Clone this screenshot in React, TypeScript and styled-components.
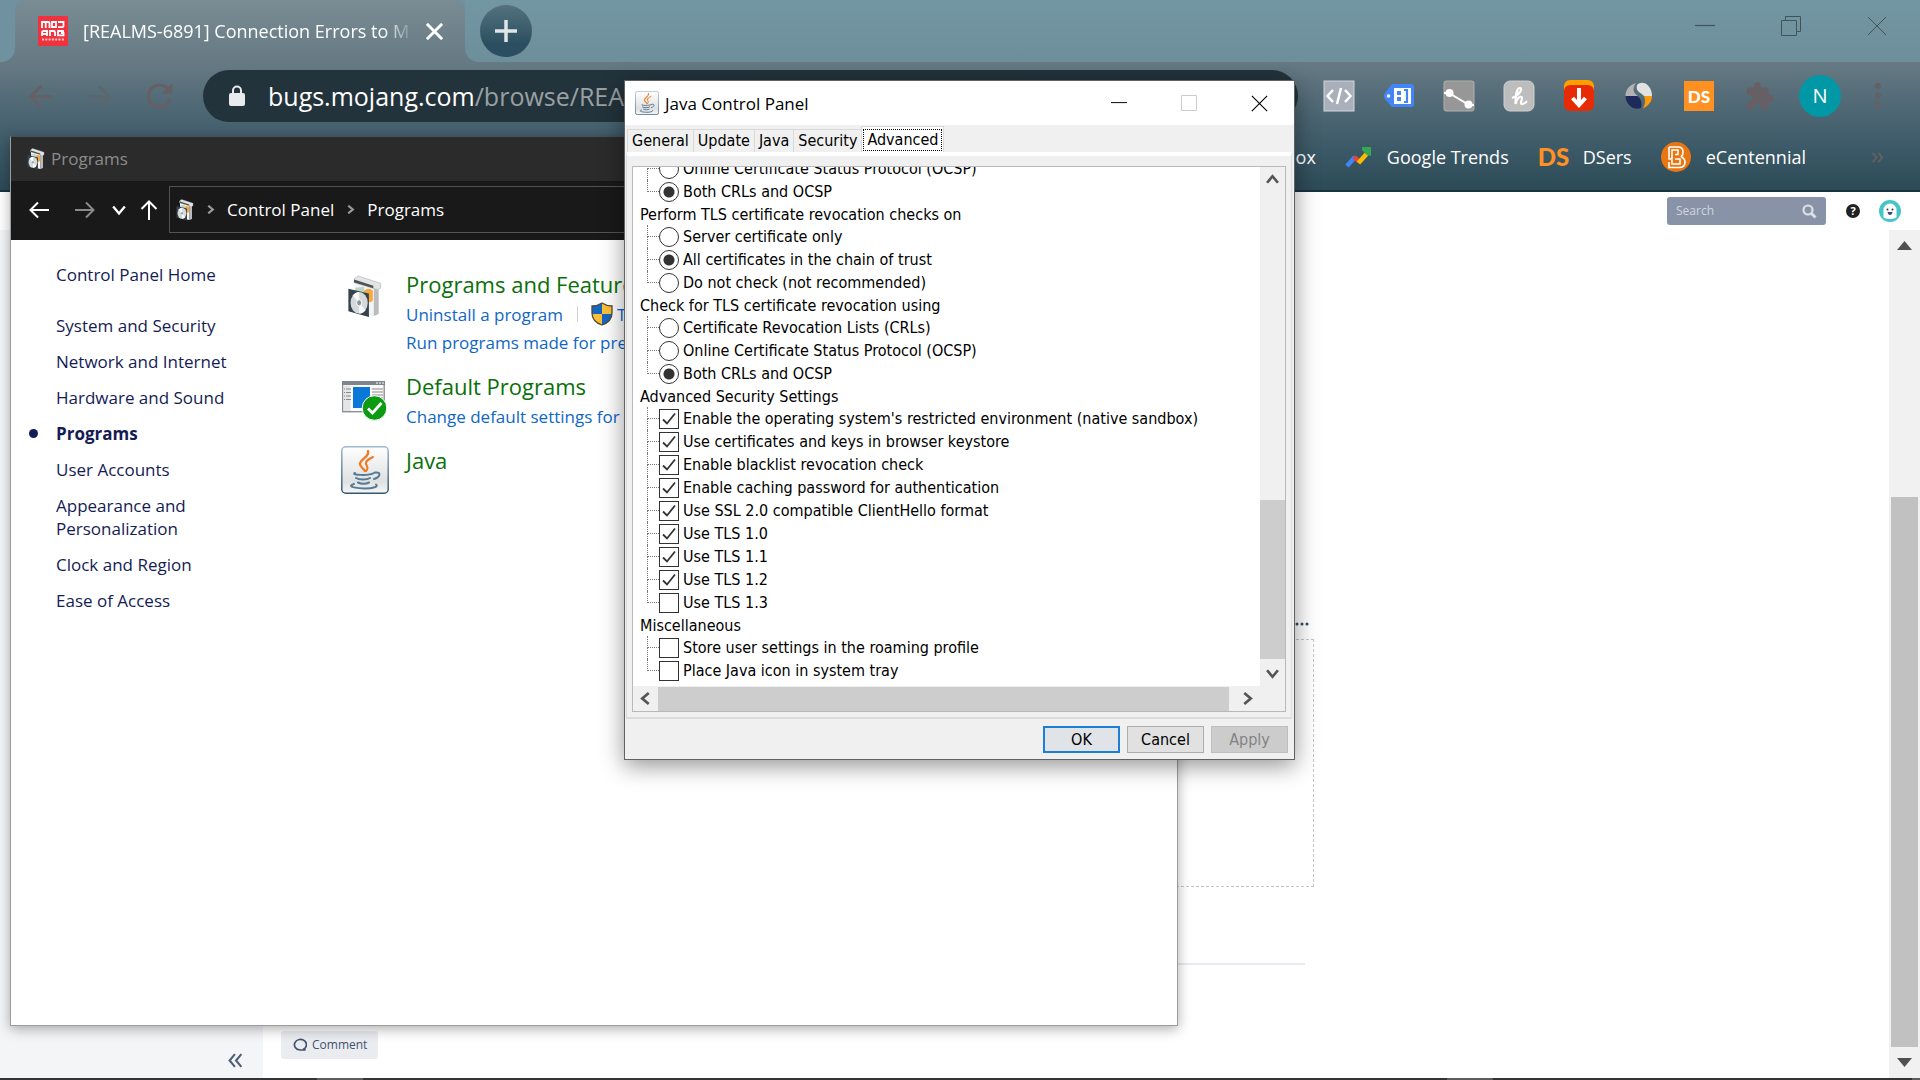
import React from 'react';
import styled, { createGlobalStyle } from 'styled-components';

const ui = `'Open Sans', 'Noto Sans', sans-serif`;
const dialogFont = `'DejaVu Sans Condensed', 'Noto Sans', sans-serif`;
const stripColor = '#7092a0';
const mutedIcon = '#665f63';

const GlobalStyle = createGlobalStyle`
  *, *::before, *::after { box-sizing: border-box; }
  html, body { margin: 0; }
  body { font-family: ${ui}; overflow: hidden; }
  button { font: inherit; color: inherit; background: none; border: 0; padding: 0; }
  a { color: inherit; text-decoration: none; }
  svg { display: block; flex: none; }
`;

/* ---------- Desktop ---------- */

const Desktop = styled.div`
  position: relative;
  display: flex;
  flex-direction: column;
  height: 100vh;
  overflow: hidden;
  background: #fff;
`;

const Taskbar = styled.footer`
  display: flex;
  flex: none;
  height: 2px;
  background: #333436;
`;

const TaskGap = styled.span<{ $grow: number }>`
  flex: ${p => p.$grow};
`;

const TaskMark = styled.span<{ $wide?: boolean }>`
  width: ${p => (p.$wide ? 46 : 8)}px;
  background: #5b5d60;
`;

/* ---------- Browser chrome ---------- */

const BrowserHead = styled.header`
  flex: none;
  border-bottom: 2px solid #1b333e;
  background: linear-gradient(#7a8c93 0, #667a84 62px, #4b6572 116px, #3b5866 152px, #2d4a57 190px);
`;

const TabStrip = styled.div`
  display: flex;
  height: 62px;
`;

const StripStart = styled.div`
  width: 15px;
  background: ${stripColor};
  border-bottom-right-radius: 14px;
`;

const StripRest = styled.div`
  display: flex;
  flex: 1;
  align-items: center;
  padding-left: 15px;
  background: linear-gradient(#7296a2, #6d8f9b);
  border-bottom-left-radius: 14px;
`;

const Tab = styled.div`
  display: flex;
  align-items: center;
  width: 450px;
  padding: 0 22px 0 23px;
  background:
    radial-gradient(circle at 10px 10px, transparent 10px, ${stripColor} 10px) left top / 10px 10px no-repeat,
    radial-gradient(circle at 0 10px, transparent 10px, ${stripColor} 10px) right top / 10px 10px no-repeat;
`;

const TabTitle = styled.span`
  flex: 1;
  margin: 0 16px 0 15px;
  overflow: hidden;
  white-space: nowrap;
  font-size: 18px;
  line-height: 28px;
  color: #fff;
  mask-image: linear-gradient(90deg, #000 300px, transparent 332px);
`;

const NewTab = styled.button`
  display: grid;
  place-items: center;
  width: 52px;
  height: 52px;
  border-radius: 50%;
  background: linear-gradient(#54727e, #2b4f60 75%);
`;

const WindowButtons = styled.div`
  display: flex;
  gap: 66px;
  margin: 0 33px 10px auto;
`;

const Toolbar = styled.div`
  display: flex;
  align-items: center;
  height: 68px;
  padding: 0 39px 0 28px;
`;

const NavButtons = styled.div`
  display: flex;
  gap: 34px;
  width: 175px;
`;

const Address = styled.div`
  display: flex;
  flex: 1;
  align-items: center;
  gap: 23px;
  height: 52px;
  padding-left: 26px;
  border-radius: 26px;
  background: #23333b;
`;

const Url = styled.a`
  font-size: 25px;
  line-height: 36px;
  color: #9aa0a3;
`;

const UrlHost = styled.span`
  color: #fff;
`;

const Extensions = styled.div`
  display: flex;
  align-items: center;
  gap: 28px;
  margin-left: 25px;
`;

const Tool = styled.button`
  display: grid;
  place-items: center;
  width: 32px;
  height: 32px;
`;

const Profile = styled.button`
  width: 42px;
  height: 42px;
  margin: 0 6px 0 -4px;
  border-radius: 50%;
  background: #0097a7;
  color: #fff;
  font-size: 20px;
  line-height: 42px;
`;

const Bookmarks = styled.nav`
  display: flex;
  align-items: center;
  justify-content: flex-end;
  gap: 29px;
  height: 60px;
  padding: 0 36px 6px 27px;
`;

const Bookmark = styled.a`
  display: flex;
  align-items: center;
  gap: 15px;
  color: #fff;
  font-size: 18px;
  line-height: 26px;
`;

const MoreBookmarks = styled.button`
  margin-left: 36px;
`;

/* ---------- Issue tracker page ---------- */

const PageHead = styled.div`
  display: flex;
  flex: none;
  align-items: center;
  justify-content: flex-end;
  height: 38px;
  padding-right: 19px;
`;

const SearchBox = styled.label`
  display: flex;
  align-items: center;
  width: 159px;
  height: 28px;
  padding: 0 9px;
  border-radius: 3px;
  background: #8993a7;
`;

const SearchInput = styled.input`
  flex: 1;
  min-width: 0;
  padding: 0;
  border: 0;
  outline: 0;
  background: none;
  font: 12px/20px ${ui};
  &::placeholder { color: #d0d5df; opacity: 1; }
`;

const HelpButton = styled.button`
  width: 14px;
  height: 14px;
  margin: 0 19px 0 20px;
  border-radius: 50%;
  background: #222;
  color: #fff;
  font-size: 11px;
  font-weight: 700;
  line-height: 14px;
`;

const PageBody = styled.div`
  display: flex;
  flex: 1;
  min-height: 0;
`;

const PageSidebar = styled.aside`
  display: flex;
  align-items: flex-end;
  justify-content: flex-end;
  width: 263px;
  padding: 0 20px 10px;
  background: #f4f5f7;
`;

const Issue = styled.main`
  display: flex;
  flex: 1;
  flex-direction: column;
  justify-content: flex-end;
  padding: 0 0 19px 18px;
`;

const IssueColumn = styled.div`
  width: 1033px;
`;

const SectionMenu = styled.button`
  display: block;
  margin: 0 5px 13px auto;
`;

const DropZone = styled.div`
  height: 248px;
  border: 1px dashed #c4c6ca;
`;

const Divider = styled.hr`
  height: 2px;
  margin: 76px 9px 66px 0;
  border: 0;
  background: #e9eaef;
`;

const CommentButton = styled.button`
  display: flex;
  align-items: center;
  gap: 5px;
  height: 28px;
  padding: 0 11px;
  border-radius: 3px;
  background: #ebecf0;
  color: #42526e;
  font-size: 12px;
  line-height: 20px;
`;

const PageScroll = styled.div`
  display: flex;
  flex-direction: column;
  justify-content: space-between;
  width: 31px;
  padding: 0 2px;
  background: #f1f1f1;
`;

const PageScrollButton = styled.button`
  display: grid;
  place-items: center;
  width: 100%;
  height: 31px;
`;

const ScrollTrack = styled.div`
  display: flex;
  flex: 1;
  flex-direction: column;
  justify-content: flex-end;
`;

const ScrollThumb = styled.div<{ $size: number }>`
  height: ${p => p.$size}%;
  background: #c1c1c1;
`;

/* ---------- Control panel window ---------- */

const ProgramsWindow = styled.section`
  position: absolute;
  left: 10px;
  top: 136px;
  width: 1168px;
  height: 890px;
  border: 1px solid #9b9b9b;
  border-top-color: #454f54;
  background: #fff;
  box-shadow: 0 3px 12px rgba(0, 0, 0, 0.32);
`;

const ProgramsTitle = styled.header`
  display: flex;
  align-items: center;
  gap: 6px;
  height: 44px;
  padding-left: 16px;
  background: #2b2b2b;
  color: #8b8b8b;
  font-size: 17px;
  line-height: 24px;
`;

const ProgramsNav = styled.nav`
  display: flex;
  align-items: center;
  height: 59px;
  padding: 0 0 2px 18px;
  background: #191919;
  color: #fff;
`;

const HistoryButtons = styled.div`
  display: flex;
  align-items: center;
  width: 140px;
`;

const HistoryButton = styled.button<{ $gap: number }>`
  margin-right: ${p => p.$gap}px;
`;

const PathBox = styled.div`
  display: flex;
  flex: 1;
  align-items: center;
  gap: 12px;
  height: 47px;
  padding-left: 6px;
  border: 1px solid #535353;
  font-size: 17px;
  line-height: 24px;
`;

const ProgramsBody = styled.div`
  display: flex;
`;

const CategoryList = styled.ul`
  display: flex;
  flex-direction: column;
  gap: 13px;
  width: 328px;
  margin: 0;
  padding: 23px 110px 0 45px;
  list-style: none;
  color: #151c55;
  font-size: 17px;
  line-height: 23px;
`;

const Category = styled.li<{ $home?: boolean; $current?: boolean }>`
  position: relative;
  margin-bottom: ${p => (p.$home ? 15 : 0)}px;
  font-weight: ${p => (p.$current ? 700 : 400)};
  &::before {
    content: '';
    display: ${p => (p.$current ? 'block' : 'none')};
    position: absolute;
    left: -27px;
    top: 7px;
    width: 9px;
    height: 9px;
    border-radius: 50%;
    background: #151c55;
  }
`;

const Applets = styled.div`
  display: flex;
  flex: 1;
  flex-direction: column;
  gap: 14px;
  min-width: 0;
  padding-top: 28px;
  white-space: nowrap;
`;

const Applet = styled.article`
  display: flex;
  align-items: flex-start;
  gap: 17px;
`;

const AppletIcon = styled.div<{ $drop: number }>`
  display: grid;
  justify-items: center;
  width: 50px;
  padding: ${p => p.$drop}px 0 0 2px;
`;

const AppletTitle = styled.h2`
  margin: 0;
  color: #0a700a;
  font-size: 22px;
  font-weight: 400;
  line-height: 32px;
`;

const AppletLinks = styled.div`
  display: flex;
  align-items: center;
  height: 28px;
  color: #0f67c6;
  font-size: 17px;
`;

const LinkRule = styled.span`
  width: 1px;
  height: 16px;
  margin: 0 13px 0 14px;
  background: #d0d0d0;
`;

const ShieldLink = styled.a`
  display: flex;
  align-items: center;
  gap: 4px;
`;

/* ---------- Java control panel dialog ---------- */

const Dialog = styled.section`
  position: absolute;
  left: 624px;
  top: 80px;
  display: flex;
  flex-direction: column;
  width: 671px;
  height: 680px;
  border: 1px solid #5f6264;
  background: #f0f0f0;
  color: #000;
  font-family: ${dialogFont};
  font-size: 16px;
  box-shadow: 0 6px 22px rgba(0, 0, 0, 0.42);
`;

const DialogTitle = styled.header`
  display: flex;
  align-items: center;
  gap: 6px;
  height: 44px;
  padding: 0 26px 0 10px;
  background: #fff;
  font-family: ${ui};
  font-size: 17px;
`;

const DialogButtons = styled.div`
  display: flex;
  align-items: center;
  gap: 54px;
  margin-left: auto;
`;

const Tabs = styled.div`
  display: flex;
  align-items: flex-end;
  height: 27px;
  padding-left: 2px;
`;

const DialogTab = styled.button<{ $active?: boolean }>`
  height: ${p => (p.$active ? 26 : 23)}px;
  padding: ${p => (p.$active ? '1px' : '0 4px')};
  border: 1px solid #d9d9d9;
  border-bottom: 0;
  border-right-width: ${p => (p.$active ? 1 : 0)}px;
  background: ${p => (p.$active ? '#fff' : '#f0f0f0')};
  line-height: 22px;
`;

const TabFocus = styled.span`
  display: block;
  padding: 0 4px;
  outline: 1px dotted #000;
  outline-offset: -1px;
`;

const TabPane = styled.div`
  display: flex;
  flex: 1;
  min-height: 0;
  margin: 0 2px 0 1px;
  padding: 10px 5px 5px;
  border: 1px solid #dcdcdc;
  border-top: 4px solid #fff;
  border-bottom: 2px solid #dcdcdc;
`;

const ListFrame = styled.div`
  display: grid;
  flex: 1;
  grid-template-columns: 1fr 25px;
  grid-template-rows: 1fr 25px;
  min-height: 0;
  border: 1px solid #b9b9b9;
`;

const Tree = styled.div`
  display: flex;
  flex-direction: column;
  justify-content: flex-end;
  min-height: 0;
  padding-bottom: 4px;
  overflow: hidden;
  background: #fff;
`;

const TreeGroup = styled.fieldset`
  flex: none;
  margin: 0;
  padding: 0;
  border: 0;
`;

const TreeHeading = styled.legend`
  display: block;
  width: 100%;
  height: 22px;
  padding: 0 0 0 7px;
  line-height: 23px;
`;

const TreeRow = styled.label`
  display: flex;
  align-items: center;
  height: 23px;
  padding-left: 14px;
  line-height: 23px;
  white-space: nowrap;
`;

const Branch = styled.span<{ $last: boolean }>`
  align-self: stretch;
  width: 12px;
  &::before, &::after {
    content: '';
    display: block;
    height: 12px;
    border-left: 1px dotted #777;
  }
  &::before { border-bottom: 1px dotted #777; }
  &::after { height: 11px; visibility: ${p => (p.$last ? 'hidden' : 'visible')}; }
`;

const Mark = styled.input`
  appearance: none;
  flex: none;
  width: 20px;
  height: 20px;
  margin: 0 4px 0 0;
  border: 1px solid #333;
  background: #fff;
  &[type='radio'] { border-radius: 50%; }
  &[type='radio']:checked {
    background: radial-gradient(circle, #333 5px, #fff 6px);
  }
  &[type='checkbox']:checked {
    background: url("data:image/svg+xml,%3Csvg xmlns='http://www.w3.org/2000/svg' viewBox='0 0 18 18'%3E%3Cpath d='M3 9.500l4 4 8-10' fill='none' stroke='%23333' stroke-width='1.800'/%3E%3C/svg%3E");
  }
`;

const BarButton = styled.button`
  display: grid;
  place-items: center;
  flex: none;
  width: 25px;
  height: 25px;
  color: #555;
`;

const VerticalBar = styled.div`
  display: flex;
  flex-direction: column;
  min-height: 0;
`;

const VerticalTrack = styled.div`
  display: flex;
  flex: 1;
  flex-direction: column;
  justify-content: flex-end;
  margin-bottom: 2px;
`;

const HorizontalBar = styled.div`
  display: flex;
  align-items: center;
  height: 25px;
`;

const HorizontalTrack = styled.div`
  flex: 1;
  height: 24px;
`;

const Thumb = styled.div<{ $w?: number; $h?: number }>`
  width: ${p => p.$w ?? 100}%;
  height: ${p => p.$h ?? 100}%;
  background: #cdcdcd;
`;

const Actions = styled.footer`
  display: flex;
  justify-content: flex-end;
  gap: 7px;
  padding: 7px 6px 6px;
`;

const Action = styled.button<{ $primary?: boolean }>`
  width: 77px;
  height: 27px;
  border: ${p => (p.$primary ? '2px solid #1b7fd6' : '1px solid #adadad')};
  background: ${p => (p.$primary ? '#e0e4e9' : '#e1e1e1')};
  &:disabled { background: #cccccc; border-color: #bfbfbf; color: #838383; }
`;

/* ---------- Icons ---------- */

const MojangIcon = () => (
  <svg width="30" height="30" viewBox="0 0 30 30">
    <rect width="30" height="30" fill="#ef323d" />
    <g fill="none" stroke="#fff" strokeWidth="1.800">
      <path d="M4 12V6h6.500q1 0 1 1v5M7.700 6v6M14 6h4v5h-4zM20 6h5.500v4q0 1.200-1.200 1.200H20" />
      <path d="M4 20v-3.200q0-1.800 1.800-1.800H9v5M4 18h5M12 20v-5h3.500q1.500 0 1.500 1.500V20M26 15h-6v4.300h5.500V17H23" />
    </g>
    <path d="M4 23.500h22" stroke="#fff" strokeWidth="2" strokeDasharray="2 1.300" opacity=".75" />
  </svg>
);

const Cross = ({ size, width = 1, color = '#000' }: { size: number; width?: number; color?: string }) => (
  <svg width={size} height={size} viewBox="0 0 20 20" fill="none" stroke={color} strokeWidth={width}>
    <path d="M1 1l18 18M19 1L1 19" />
  </svg>
);

const Minimize = ({ size, color = '#000' }: { size: number; color?: string }) => (
  <svg width={size} height={size} viewBox="0 0 20 20">
    <path d="M0 9.500h20" stroke={color} strokeWidth="1.200" />
  </svg>
);

const Restore = () => (
  <svg width="20" height="20" viewBox="0 0 20 20" fill="none" stroke="#40545c">
    <path d="M.5 4.500h15v15H.5zM4.500 4.500v-4h15v15h-4" />
  </svg>
);

const ArrowNav = ({ flip, color }: { flip?: boolean; color: string }) => (
  <svg width="25" height="25" viewBox="0 0 26 26" fill="none" stroke={color} strokeWidth="3">
    <path d={flip ? 'M1 13h22M12 2l11.500 11L12 24' : 'M25 13H3M14 2L2.500 13 14 24'} />
  </svg>
);

const Reload = () => (
  <svg width="27" height="26" viewBox="0 0 27 26">
    <path d="M21.500 5.500A11 11 0 1 0 24 16" fill="none" stroke={mutedIcon} strokeWidth="3" />
    <path d="M26.500 0v11H15.500z" fill={mutedIcon} />
  </svg>
);

const Lock = () => (
  <svg width="16" height="22" viewBox="0 0 16 22">
    <path d="M4 9V5.500a4 4 0 0 1 8 0V9" fill="none" stroke="#e8eaed" strokeWidth="2" />
    <rect y="8" width="16" height="13" rx="2" fill="#e8eaed" />
  </svg>
);

const CodeIcon = () => (
  <svg width="32" height="32" viewBox="0 0 32 32">
    <rect x="1" y="1" width="30" height="30" fill="#a9afbb" stroke="#d3d6dc" />
    <path d="M10 10l-5.500 6 5.500 6M22 10l5.500 6-5.500 6M18 8l-4 16" fill="none" stroke="#fff" strokeWidth="2.500" />
  </svg>
);

const TagIcon = () => (
  <svg width="32" height="32" viewBox="0 0 32 32">
    <path d="M9 4h19a3 3 0 0 1 3 3v17a3 3 0 0 1-3 3H9L1 18v-4z" fill="#4285f4" />
    <rect x="11" y="8" width="17" height="16" fill="#fff" />
    <circle cx="5.500" cy="16" r="1.800" fill="#fff" />
    <path d="M14 11h4v4h-4zM14 17h4v4h-4z" fill="#4285f4" />
    <path d="M21 10h3v12h-3" fill="none" stroke="#4285f4" strokeWidth="2.200" />
  </svg>
);

const LineIcon = () => (
  <svg width="32" height="32" viewBox="0 0 32 32">
    <rect x="1" y="1" width="30" height="30" rx="2" fill="#979797" stroke="#b0b0b0" />
    <path d="M1 13h5L26 25h5" fill="none" stroke="#fff" strokeWidth="2" />
    <circle cx="6.500" cy="13" r="4" fill="#fff" />
    <circle cx="25.500" cy="24.500" r="4" fill="#fff" />
  </svg>
);

const HoneyIcon = () => (
  <svg width="32" height="32" viewBox="0 0 32 32">
    <rect x="1" y="1" width="30" height="30" rx="6" fill="#bdbdbd" stroke="#cfcfcf" />
    <path d="M9 18C17 15 20 8 17 8s-4.500 8-4.500 16c1-5 4-8 6-7s-2.500 7 .5 7 4-2 5-3" fill="none" stroke="#fff" strokeWidth="2.200" />
  </svg>
);

const DownloadIcon = () => (
  <svg width="32" height="32" viewBox="0 0 32 32">
    <rect x="1" width="30" height="20" rx="6" fill="#ffa000" />
    <rect x="1" y="5" width="30" height="26" rx="6" fill="#e62b05" />
    <path d="M16 8v16M9.500 18l6.500 7 6.500-7" fill="none" stroke="#fff" strokeWidth="4" />
  </svg>
);

const SwirlIcon = () => (
  <svg width="32" height="32" viewBox="0 0 32 32">
    <path d="M13 3C6 5 2.500 10 2.500 16H15C10 13 9 8 13 3z" fill="#b3b3b3" />
    <path d="M2.500 16H14c5 3 5 8 4 12-8 3-15.500-4-15.500-12z" fill="#1f2a5c" />
    <path d="M14 5c3-3 8-3 11.500 1 2.500 3 3.500 6 3.500 10h-8c-2-3-9-4-7-11z" fill="#e2e2e2" />
    <path d="M21 16h8c0 6-4 10-9 12.500 2-4 3-8 1-12.500z" fill="#ff9a0c" />
  </svg>
);

const LogoText = styled.span<{ $boxed?: boolean }>`
  display: grid;
  place-items: center;
  width: 30px;
  height: 30px;
  background: ${p => (p.$boxed ? '#ff9123' : 'transparent')};
  color: ${p => (p.$boxed ? '#fff' : '#ff9123')};
  font-family: Lato, sans-serif;
  font-size: ${p => (p.$boxed ? 17 : 24)}px;
  font-weight: 900;
`;

const Puzzle = () => (
  <svg width="31" height="31" viewBox="0 0 24 24" fill={mutedIcon}>
    <path d="M20.500 11H19V7a2 2 0 0 0-2-2h-4V3.500a2.500 2.500 0 0 0-5 0V5H4a2 2 0 0 0-2 2v3.800h1.500a2.700 2.700 0 0 1 0 5.400H2V20a2 2 0 0 0 2 2h3.800v-1.500a2.700 2.700 0 0 1 5.400 0V22H17a2 2 0 0 0 2-2v-4h1.500a2.500 2.500 0 0 0 0-5z" />
  </svg>
);

const Dots = () => (
  <svg width="6" height="30" viewBox="0 0 6 30" fill={mutedIcon}>
    <circle cx="3" cy="5" r="3" />
    <circle cx="3" cy="14.500" r="3" />
    <circle cx="3" cy="24" r="3" />
  </svg>
);

const TrendsIcon = () => (
  <svg width="27" height="22" viewBox="0 0 27 22" fill="none" strokeWidth="4.500">
    <path d="M2 20l8-9" stroke="#4285f4" />
    <path d="M9 11l6 5" stroke="#ea4335" />
    <path d="M13.500 17l8-9" stroke="#fbbc04" />
    <path d="M17 1h9v9l-4-1-5-5z" fill="#34a853" />
  </svg>
);

const CentennialIcon = () => (
  <svg width="30" height="30" viewBox="0 0 30 30">
    <circle cx="15" cy="15" r="15" fill="#ea7612" />
    <path d="M8 5h9q5 0 5 5 0 3-1.500 4.500Q24 17 24 20q0 5.500-6 5.500H8V20M8 5v12h3V8h6v4.500h-3M14 17h5v5h-8v-4" fill="none" stroke="#fff" strokeWidth="1.600" />
  </svg>
);

const Chevrons = ({ left, color, size }: { left?: boolean; color: string; size: number }) => (
  <svg width={size} height={size} viewBox="0 0 14 14" fill="none" stroke={color} strokeWidth="2">
    <path d={left ? 'M6.500 1l-5 6 5 6M12.500 1l-5 6 5 6' : 'M2 2l4 5-4 5M8 2l4 5-4 5'} />
  </svg>
);

const Magnifier = () => (
  <svg width="15" height="15" viewBox="0 0 15 15" fill="none" stroke="#dde1e8">
    <circle cx="6" cy="6" r="4.500" strokeWidth="2.200" />
    <path d="M9.500 9.500l4 4" strokeWidth="2.800" />
  </svg>
);

const GhostAvatar = () => (
  <svg width="22" height="22" viewBox="0 0 22 22">
    <circle cx="11" cy="11" r="11" fill="#44c6c8" />
    <path d="M4.500 17.500V10a6.500 6.500 0 0 1 13 0v7.500q-3 1.500-6.500 1.500t-6.500-1.500z" fill="#fff" />
    <circle cx="8.500" cy="9.500" r="1" fill="#253858" />
    <circle cx="13.500" cy="9.500" r="1" fill="#253858" />
    <path d="M8.500 12h5q-.5 3-2.500 3t-2.500-3z" fill="#3a4b84" />
  </svg>
);

const Ellipsis = () => (
  <svg width="14" height="4" viewBox="0 0 14 4" fill="#344563">
    <circle cx="2" cy="2" r="1.500" />
    <circle cx="7" cy="2" r="1.500" />
    <circle cx="12" cy="2" r="1.500" />
  </svg>
);

const CommentIcon = () => (
  <svg width="15" height="14" viewBox="0 0 15 14" fill="none" stroke="#42526e" strokeWidth="1.700">
    <path d="M11 11.500A6 5.300 0 1 0 8 12h5.500q-1.500-.5-1.700-1.700" />
  </svg>
);

const Triangle = ({ down }: { down?: boolean }) => (
  <svg width="15" height="9" viewBox="0 0 15 9" fill="#505050">
    <path d={down ? 'M0 0h15L7.500 9z' : 'M0 9h15L7.500 0z'} />
  </svg>
);

const ProgramBox = ({ width, height }: { width: number; height: number }) => (
  <svg width={width} height={height} viewBox="0 0 36 44">
    <path d="M8 6l19 5v31L8 38z" fill="#f4f4f4" />
    <path d="M27 10l5 1v29l-5 2z" fill="#b9bcbe" />
    <path d="M7 4l4-3 23 7.500v5L31 15 7 8z" fill="#e3e4e5" stroke="#b5b5b5" strokeWidth=".7" />
    <path d="M6.500 7.500l20 6V11L7 4.500z" fill="#4f5254" />
    <path d="M8 13l9-1 1 9-10 1z" fill="#bcd6c4" />
    <path d="M17 16q5-4 9 0v10q-3 4-8 0z" fill="#f6a941" />
    <path d="M1 14l21 5v24L1 37z" fill="#36434c" />
    <ellipse cx="12" cy="28.500" rx="8.800" ry="11" fill="#d5d9db" />
    <path d="M12 28.500l-6.500-7.500A9 11 0 0 1 12 17.500zM12 28.500l6.500 7.500A9 11 0 0 1 12 39.500z" fill="#fafafa" />
    <ellipse cx="12" cy="28.500" rx="2.600" ry="3.200" fill="#8b9499" stroke="#fff" />
  </svg>
);

const DefaultProgramsIcon = () => (
  <svg width="46" height="40" viewBox="0 0 46 40">
    <rect x=".7" y=".7" width="41.500" height="30" fill="#fbfbfb" stroke="#8b8f94" strokeWidth="1.400" />
    <path d="M0 0h43v4H0z" fill="#7e858c" />
    <path d="M34 2h2M37 2h2M40 2h2" stroke="#fff" />
    <path d="M1.500 4.500h7V30h-7z" fill="#e4e5e7" />
    <path d="M2 8h7M2 11.500h7M2 15h7M2 18.500h7" stroke="#888" strokeDasharray="1 1 5 9" />
    <rect x="11" y="6" width="17" height="21" fill="#0a78d7" />
    <path d="M30 8h11M30 11h11M30 14h11M30 17h11" stroke="#888" />
    <circle cx="32.500" cy="27" r="12.300" fill="#0b9a12" stroke="#fff" />
    <path d="M26 27.500l4.500 4.500 9-10" fill="none" stroke="#fff" strokeWidth="2.800" />
  </svg>
);

const JavaIcon = ({ size }: { size: number }) => (
  <svg width={size} height={size} viewBox="0 0 48 48">
    <defs>
      <linearGradient id="javaTile" x1="0" y1="0" x2="0" y2="1">
        <stop offset="0" stopColor="#fff" />
        <stop offset=".75" stopColor="#dfe0e1" />
        <stop offset="1" stopColor="#f6f6f6" />
      </linearGradient>
      <linearGradient id="javaEdge" x1="0" y1="0" x2="0" y2="1">
        <stop offset="0" stopColor="#9fb9cf" />
        <stop offset="1" stopColor="#33586f" />
      </linearGradient>
    </defs>
    <rect x=".8" y=".8" width="46.400" height="46.400" rx="4" fill="url(#javaTile)" stroke="url(#javaEdge)" strokeWidth="1.500" />
    <g fill="none" strokeLinecap="round">
      <path d="M27 5c2 6-8 8-8 13 0 3 3 4 5 7" stroke="#ee7b22" strokeWidth="2.300" />
      <path d="M32 11c-4 2-8 4-7 7 1 2 3 4 0 7" stroke="#ee7b22" strokeWidth="2" />
      <path d="M14 27c-5 2 14 3 19 0M15 32c3 2 11 2 14 0M17 36.500c3 1.500 8 1.500 11 0M34 26.500c7-1 5 5-1 6.500" stroke="#557a95" strokeWidth="2" />
      <path d="M13 38c-9 3 5 4.500 11 4.500 8 0 14-2 11-4" stroke="#557a95" strokeWidth="2" />
    </g>
  </svg>
);

const Shield = () => (
  <svg width="22" height="24" viewBox="0 0 22 24">
    <path d="M11 1c3 2 6 3 10 3v7c0 6-4 10-10 12C5 21 1 17 1 11V4c4 0 7-1 10-3z" fill="#fcc037" />
    <path d="M11 1v11H1V4c4 0 7-1 10-3zM11 12h10c-.5 5-4 9-10 11z" fill="#1666c2" />
    <path d="M11 1c3 2 6 3 10 3v7c0 6-4 10-10 12C5 21 1 17 1 11V4c4 0 7-1 10-3z" fill="none" stroke="#4f4a38" strokeWidth="1.300" />
  </svg>
);

const Caret = ({ dir, size, color = 'currentColor', width = 2 }: { dir: 'up' | 'down' | 'left' | 'right'; size: number; color?: string; width?: number }) => {
  const d = {
    up: 'M1 9l5-6 5 6',
    down: 'M1 3l5 6 5-6',
    left: 'M9 1L3 6l6 5',
    right: 'M3 1l6 5-6 5',
  }[dir];
  return (
    <svg width={size} height={size} viewBox="0 0 12 12" fill="none" stroke={color} strokeWidth={width}>
      <path d={d} />
    </svg>
  );
};

const PathArrow = ({ turn, color }: { turn: number; color: string }) => (
  <svg width="20" height="20" viewBox="0 0 20 20" fill="none" stroke={color} strokeWidth="2">
    <path transform={`rotate(${turn} 10 10)`} d="M20 10H1.500M9 2.500L1.500 10 9 17.500" />
  </svg>
);

/* ---------- Data ---------- */

type Option = { label: string; on?: boolean };
type Group = { title?: string; kind: 'radio' | 'checkbox'; options: Option[] };

const groups: Group[] = [
  {
    kind: 'radio',
    options: [{ label: 'Online Certificate Status Protocol (OCSP)' }, { label: 'Both CRLs and OCSP', on: true }],
  },
  {
    title: 'Perform TLS certificate revocation checks on',
    kind: 'radio',
    options: [
      { label: 'Server certificate only' },
      { label: 'All certificates in the chain of trust', on: true },
      { label: 'Do not check (not recommended)' },
    ],
  },
  {
    title: 'Check for TLS certificate revocation using',
    kind: 'radio',
    options: [
      { label: 'Certificate Revocation Lists (CRLs)' },
      { label: 'Online Certificate Status Protocol (OCSP)' },
      { label: 'Both CRLs and OCSP', on: true },
    ],
  },
  {
    title: 'Advanced Security Settings',
    kind: 'checkbox',
    options: [
      { label: "Enable the operating system's restricted environment (native sandbox)", on: true },
      { label: 'Use certificates and keys in browser keystore', on: true },
      { label: 'Enable blacklist revocation check', on: true },
      { label: 'Enable caching password for authentication', on: true },
      { label: 'Use SSL 2.0 compatible ClientHello format', on: true },
      { label: 'Use TLS 1.0', on: true },
      { label: 'Use TLS 1.1', on: true },
      { label: 'Use TLS 1.2', on: true },
      { label: 'Use TLS 1.3' },
    ],
  },
  {
    title: 'Miscellaneous',
    kind: 'checkbox',
    options: [{ label: 'Store user settings in the roaming profile' }, { label: 'Place Java icon in system tray' }],
  },
];

const categories = [
  'Control Panel Home',
  'System and Security',
  'Network and Internet',
  'Hardware and Sound',
  'Programs',
  'User Accounts',
  'Appearance and Personalization',
  'Clock and Region',
  'Ease of Access',
];

const tabs = ['General', 'Update', 'Java', 'Security', 'Advanced'];

/* ---------- Views ---------- */

const Browser = () => (
  <>
    <BrowserHead>
      <TabStrip>
        <StripStart />
        <Tab>
          <MojangIcon />
          <TabTitle>[REALMS-6891] Connection Errors to Minecraft</TabTitle>
          <button aria-label="Close tab"><Cross size={17} width={3.4} color="#fff" /></button>
        </Tab>
        <StripRest>
          <NewTab aria-label="New tab">
            <svg width="22" height="22" viewBox="0 0 22 22" stroke="#dfe4e6" strokeWidth="3.500">
              <path d="M11 0v22M0 11h22" />
            </svg>
          </NewTab>
          <WindowButtons>
            <button aria-label="Minimize"><Minimize size={20} color="#40545c" /></button>
            <button aria-label="Restore"><Restore /></button>
            <button aria-label="Close"><Cross size={20} color="#40545c" /></button>
          </WindowButtons>
        </StripRest>
      </TabStrip>
      <Toolbar>
        <NavButtons>
          <button aria-label="Back"><ArrowNav color={mutedIcon} /></button>
          <button aria-label="Forward"><ArrowNav flip color="#5c666d" /></button>
          <button aria-label="Reload"><Reload /></button>
        </NavButtons>
        <Address>
          <Lock />
          <Url href="#issue"><UrlHost>bugs.mojang.com</UrlHost>/browse/REALMS-6891</Url>
        </Address>
        <Extensions>
          <Tool aria-label="Code"><CodeIcon /></Tool>
          <Tool aria-label="Tag"><TagIcon /></Tool>
          <Tool aria-label="Line"><LineIcon /></Tool>
          <Tool aria-label="Honey"><HoneyIcon /></Tool>
          <Tool aria-label="Download"><DownloadIcon /></Tool>
          <Tool aria-label="Swirl"><SwirlIcon /></Tool>
          <Tool aria-label="DSers"><LogoText $boxed>DS</LogoText></Tool>
          <Tool aria-label="Extensions"><Puzzle /></Tool>
          <Profile>N</Profile>
          <button aria-label="Menu"><Dots /></button>
        </Extensions>
      </Toolbar>
      <Bookmarks>
        <Bookmark href="#inbox">Inbox</Bookmark>
        <Bookmark href="#trends"><TrendsIcon />Google Trends</Bookmark>
        <Bookmark href="#dsers"><LogoText>DS</LogoText>DSers</Bookmark>
        <Bookmark href="#ecentennial"><CentennialIcon />eCentennial</Bookmark>
        <MoreBookmarks aria-label="More bookmarks"><Chevrons color={mutedIcon} size={13} /></MoreBookmarks>
      </Bookmarks>
    </BrowserHead>
    <PageHead>
      <SearchBox>
        <SearchInput placeholder="Search" aria-label="Search" />
        <Magnifier />
      </SearchBox>
      <HelpButton>?</HelpButton>
      <button aria-label="Account"><GhostAvatar /></button>
    </PageHead>
    <PageBody>
      <PageSidebar>
        <button aria-label="Collapse sidebar"><Chevrons left color="#505f79" size={15} /></button>
      </PageSidebar>
      <Issue>
        <IssueColumn>
          <SectionMenu aria-label="Attachment options"><Ellipsis /></SectionMenu>
          <DropZone />
          <Divider />
          <CommentButton><CommentIcon />Comment</CommentButton>
        </IssueColumn>
      </Issue>
      <PageScroll>
        <PageScrollButton aria-label="Scroll up"><Triangle /></PageScrollButton>
        <ScrollTrack><ScrollThumb $size={70} /></ScrollTrack>
        <PageScrollButton aria-label="Scroll down"><Triangle down /></PageScrollButton>
      </PageScroll>
    </PageBody>
  </>
);

const ControlPanel = () => (
  <ProgramsWindow>
    <ProgramsTitle><ProgramBox width={18} height={22} />Programs</ProgramsTitle>
    <ProgramsNav>
      <HistoryButtons>
        <HistoryButton $gap={26} aria-label="Back"><PathArrow turn={0} color="#fff" /></HistoryButton>
        <HistoryButton $gap={17} aria-label="Forward"><PathArrow turn={180} color="#8a8a8a" /></HistoryButton>
        <HistoryButton $gap={13} aria-label="Recent"><Caret dir="down" size={14} /></HistoryButton>
        <HistoryButton $gap={0} aria-label="Up"><PathArrow turn={90} color="#fff" /></HistoryButton>
      </HistoryButtons>
      <PathBox>
        <ProgramBox width={18} height={22} />
        <Caret dir="right" size={9} color="#9a9a9a" width={3} />
        <a href="#control-panel">Control Panel</a>
        <Caret dir="right" size={9} color="#9a9a9a" width={3} />
        <a href="#programs">Programs</a>
      </PathBox>
    </ProgramsNav>
    <ProgramsBody>
      <CategoryList>
        {categories.map((name, i) => (
          <Category key={name} $home={i === 0} $current={name === 'Programs'}>
            <a href={`#category-${i}`}>{name}</a>
          </Category>
        ))}
      </CategoryList>
      <Applets>
        <Applet>
          <AppletIcon $drop={7}><ProgramBox width={36} height={43} /></AppletIcon>
          <div>
            <AppletTitle>Programs and Features</AppletTitle>
            <AppletLinks>
              <a href="#uninstall">Uninstall a program</a>
              <LinkRule />
              <ShieldLink href="#features"><Shield />Turn Windows features on or off</ShieldLink>
            </AppletLinks>
            <AppletLinks><a href="#compat">Run programs made for previous versions of Windows</a></AppletLinks>
          </div>
        </Applet>
        <Applet>
          <AppletIcon $drop={11}><DefaultProgramsIcon /></AppletIcon>
          <div>
            <AppletTitle>Default Programs</AppletTitle>
            <AppletLinks><a href="#defaults">Change default settings for media or devices</a></AppletLinks>
          </div>
        </Applet>
        <Applet>
          <AppletIcon $drop={2}><JavaIcon size={48} /></AppletIcon>
          <AppletTitle>Java</AppletTitle>
        </Applet>
      </Applets>
    </ProgramsBody>
  </ProgramsWindow>
);

const JavaDialog = () => (
  <Dialog role="dialog" aria-label="Java Control Panel">
    <DialogTitle>
      <JavaIcon size={24} />
      Java Control Panel
      <DialogButtons>
        <button aria-label="Minimize"><Minimize size={16} /></button>
        <button aria-label="Maximize" disabled>
          <svg width="16" height="16" viewBox="0 0 16 16" fill="none" stroke="#ccc"><path d="M.5.5h15v15H.5z" /></svg>
        </button>
        <button aria-label="Close"><Cross size={17} width={1.3} /></button>
      </DialogButtons>
    </DialogTitle>
    <Tabs>
      {tabs.map(t => (
        <DialogTab key={t} $active={t === 'Advanced'}>
          {t === 'Advanced' ? <TabFocus>{t}</TabFocus> : t}
        </DialogTab>
      ))}
    </Tabs>
    <TabPane>
      <ListFrame>
        <Tree>
          {groups.map((g, gi) => (
            <TreeGroup key={gi}>
              {g.title && <TreeHeading>{g.title}</TreeHeading>}
              {g.options.map((o, i) => (
                <TreeRow key={o.label}>
                  <Branch $last={i === g.options.length - 1} />
                  <Mark type={g.kind} name={`group-${gi}`} defaultChecked={o.on} />
                  {o.label}
                </TreeRow>
              ))}
            </TreeGroup>
          ))}
        </Tree>
        <VerticalBar>
          <BarButton aria-label="Scroll up"><Caret dir="up" size={13} width={2.5} /></BarButton>
          <VerticalTrack><Thumb $h={34} /></VerticalTrack>
          <BarButton aria-label="Scroll down"><Caret dir="down" size={13} width={2.5} /></BarButton>
        </VerticalBar>
        <HorizontalBar>
          <BarButton aria-label="Scroll left"><Caret dir="left" size={13} width={2.5} /></BarButton>
          <HorizontalTrack><Thumb $w={99} /></HorizontalTrack>
          <BarButton aria-label="Scroll right"><Caret dir="right" size={13} width={2.5} /></BarButton>
        </HorizontalBar>
      </ListFrame>
    </TabPane>
    <Actions>
      <Action $primary>OK</Action>
      <Action>Cancel</Action>
      <Action disabled>Apply</Action>
    </Actions>
  </Dialog>
);

export default function App() {
  return (
    <>
      <GlobalStyle />
      <Desktop>
        <Browser />
        <Taskbar>
          <TaskGap $grow={317} />
          <TaskMark $wide />
          <TaskGap $grow={1084} />
          <TaskMark $wide />
          <TaskGap $grow={419} />
          <TaskMark />
        </Taskbar>
        <ControlPanel />
        <JavaDialog />
      </Desktop>
    </>
  );
}
